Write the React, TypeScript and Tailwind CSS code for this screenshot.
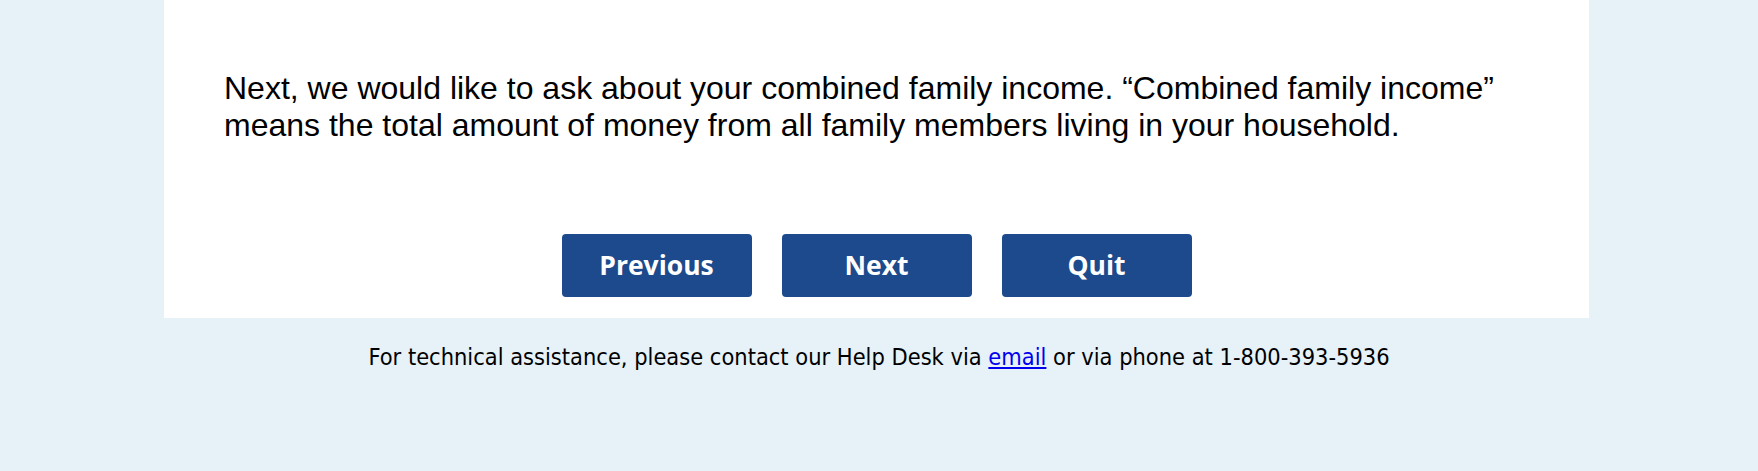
import React from 'react';

const NavButton: React.FC<{ label: string }> = ({ label }) => (
  <button className="w-[190px] h-[63px] rounded-[4px] bg-[#1c4a8c] text-white text-[26.5px] font-bold font-['Open_Sans',sans-serif]">
    {label}
  </button>
);

export default function App() {
  return (
    <div className="min-h-[471px] bg-[#e6f1f8]">
      <div className="ml-[164px] w-[1425px] h-[318px] bg-white pt-[70px] pl-[60px] pr-[60px] flex flex-col">
        <p className="font-['Liberation_Sans',Arial,sans-serif] text-[32px] leading-[36.8px] text-black">
          Next, we would like to ask about your combined family income. “Combined family income” means the total
          amount of money from all family members living in your household.
        </p>
        <div className="mt-auto mb-[21px] flex justify-center gap-[30px] -ml-[60px] -mr-[60px]">
          <NavButton label="Previous" />
          <NavButton label="Next" />
          <NavButton label="Quit" />
        </div>
      </div>
      <p className="pt-[25px] text-center text-[23.4px] leading-[28px] text-black font-['DejaVu_Sans_Condensed','DejaVu_Sans',sans-serif]">
        For technical assistance, please contact our Help Desk via{' '}
        <a href="#" className="text-[#0000ee] underline">email</a> or via phone at 1-800-393-5936
      </p>
    </div>
  );
}
